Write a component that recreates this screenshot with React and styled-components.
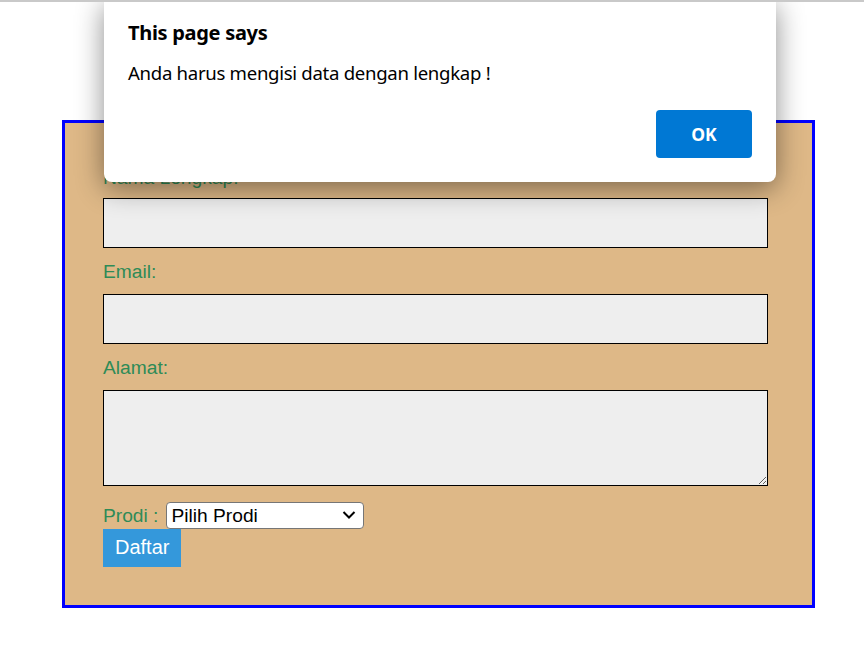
import React from "react";
import styled, { createGlobalStyle } from "styled-components";

const Global = createGlobalStyle`
  html, body { margin: 0; padding: 0; background: #ffffff; }
  body { font-family: "Liberation Sans", Arial, sans-serif; }
`;

const Page = styled.div`
  position: relative;
  width: 864px;
  height: 646px;
  overflow: hidden;
  border-top: 2px solid #c9c9c9;
  box-sizing: border-box;
`;

const FormBox = styled.form`
  box-sizing: border-box;
  width: 753px;
  margin: 118px 0 0 62px;
  border: 3px solid #0000ff;
  background: #deb887;
  padding: 44px 44px 38px 38px;
  display: flex;
  flex-direction: column;
  align-items: flex-start;
`;

const Label = styled.label`
  display: block;
  font-size: 19.2px;
  line-height: 21px;
  color: #2e8b57;
  margin-bottom: ${(p) => (p.$tight ? "10px" : "12px")};
`;

const Field = styled.input`
  box-sizing: border-box;
  display: block;
  width: 665px;
  height: 50px;
  margin: 0 0 13px;
  border: 1px solid #000;
  background: #eeeeee;
  font-size: 18px;
`;

const Area = styled.textarea`
  box-sizing: border-box;
  display: block;
  width: 665px;
  height: 96px;
  margin: 0 0 16px;
  border: 1px solid #000;
  background: #eeeeee;
  font-size: 18px;
`;

const Row = styled.div`
  display: flex;
  align-items: center;
  gap: 8px;
`;

const RowLabel = styled.span`
  font-size: 19.2px;
  line-height: 27px;
  color: #2e8b57;
`;

const SelectWrap = styled.span`
  position: relative;
  display: inline-flex;
`;

const Select = styled.select`
  box-sizing: border-box;
  width: 198px;
  height: 27px;
  padding: 0 24px 0 4px;
  font-family: "Liberation Sans", Arial, sans-serif;
  font-size: 19.2px;
  color: #000;
  background: #fff;
  border: 1px solid #767676;
  border-radius: 4px;
  margin: 0;
  appearance: none;
  -webkit-appearance: none;
`;

const Chevron = styled.svg`
  position: absolute;
  right: 8px;
  top: 8px;
  width: 14px;
  height: 10px;
  pointer-events: none;
`;

const Submit = styled.button`
  border: none;
  background: #3498db;
  color: #fff;
  font-family: "Liberation Sans", Arial, sans-serif;
  font-size: 20px;
  line-height: 23px;
  padding: 7px 12px 8px;
  margin: 0;
  cursor: pointer;
`;

const Dialog = styled.div`
  position: absolute;
  top: -2px;
  left: 104px;
  width: 672px;
  height: 182px;
  box-sizing: border-box;
  background: #ffffff;
  border-radius: 0 0 8px 8px;
  box-shadow: 0 6px 28px rgba(0, 0, 0, 0.45);
  padding: 19px 24px 24px;
  display: flex;
  flex-direction: column;
  font-family: "Noto Sans", "Open Sans", sans-serif;
  color: #000;
`;

const Title = styled.div`
  font-size: 20px;
  font-weight: 700;
  line-height: 27px;
  letter-spacing: -0.3px;
`;

const Message = styled.div`
  margin-top: 14px;
  font-size: 18.6px;
  line-height: 26px;
  letter-spacing: -0.3px;
`;

const Actions = styled.div`
  margin-top: auto;
  display: flex;
  justify-content: flex-end;
`;

const OkButton = styled.button`
  width: 96px;
  height: 48px;
  border: none;
  border-radius: 4px;
  background: #0078d4;
  color: #fff;
  font-family: "Noto Sans", "Open Sans", sans-serif;
  font-size: 17.5px;
  font-weight: 700;
`;

export default function App() {
  return (
    <>
      <Global />
      <Page>
        <FormBox onSubmit={(e) => e.preventDefault()}>
          <Label htmlFor="nama" $tight>Nama Lengkap:</Label>
          <Field id="nama" type="text" />
          <Label htmlFor="email">Email:</Label>
          <Field id="email" type="text" />
          <Label htmlFor="alamat">Alamat:</Label>
          <Area id="alamat" />
          <Row>
            <RowLabel>Prodi :</RowLabel>
            <SelectWrap>
              <Select defaultValue="">
                <option value="">Pilih Prodi</option>
                <option value="ti">Teknik Informatika</option>
                <option value="si">Sistem Informasi</option>
              </Select>
              <Chevron viewBox="0 0 14 10" aria-hidden="true">
                <path d="M1.5 2 L7 7.5 L12.5 2" fill="none" stroke="#000" strokeWidth="2" />
              </Chevron>
            </SelectWrap>
          </Row>
          <Submit type="submit">Daftar</Submit>
        </FormBox>
        <Dialog role="alertdialog">
          <Title>This page says</Title>
          <Message>Anda harus mengisi data dengan lengkap !</Message>
          <Actions>
            <OkButton>OK</OkButton>
          </Actions>
        </Dialog>
      </Page>
    </>
  );
}
